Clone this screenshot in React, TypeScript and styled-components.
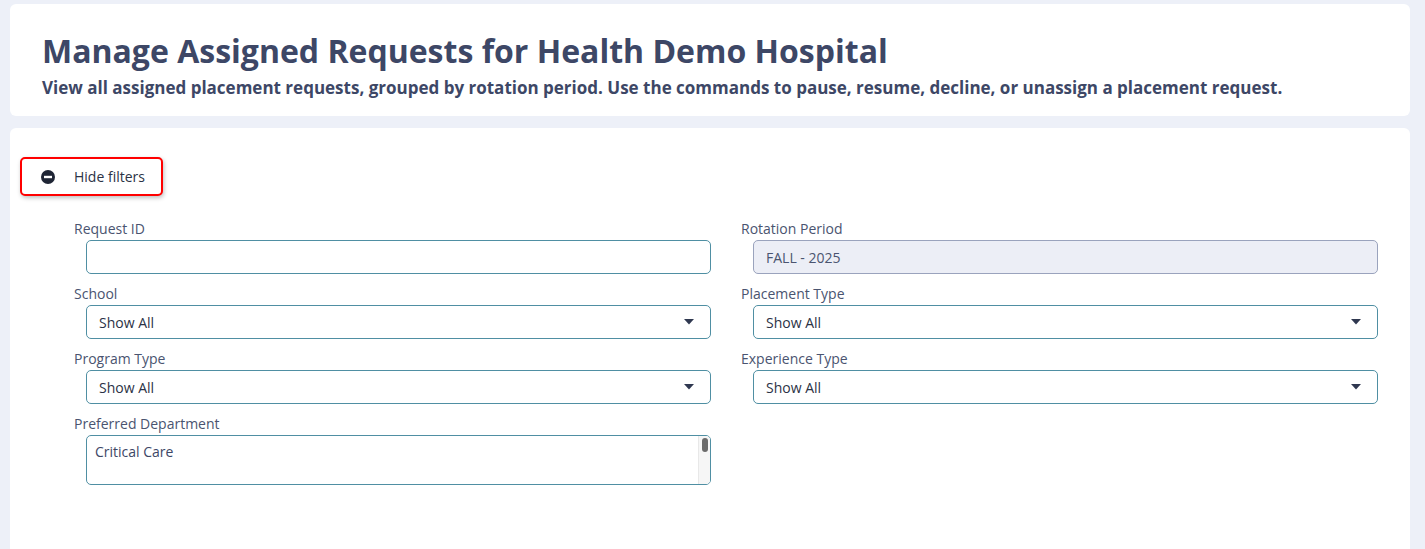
import React from "react";
import styled, { createGlobalStyle } from "styled-components";

const GlobalStyle = createGlobalStyle`
  body {
    margin: 0;
    background: #edf0f8;
    font-family: "Open Sans", "Noto Sans", sans-serif;
    color: #3d4766;
  }
`;

type Field = {
  label: string;
  kind: "text" | "select" | "disabled" | "list";
  value?: string;
};

const fields: Field[] = [
  { label: "Request ID", kind: "text" },
  { label: "Rotation Period", kind: "disabled", value: "FALL - 2025" },
  { label: "School", kind: "select", value: "Show All" },
  { label: "Placement Type", kind: "select", value: "Show All" },
  { label: "Program Type", kind: "select", value: "Show All" },
  { label: "Experience Type", kind: "select", value: "Show All" },
  { label: "Preferred Department", kind: "list", value: "Critical Care" },
];

const MinusCircle = () => (
  <svg width="14" height="14" viewBox="0 0 14 14">
    <circle cx="7" cy="7" r="7" fill="#1f2535" />
    <rect x="3" y="5.8" width="8" height="2.4" fill="#fff" />
  </svg>
);

const Caret = () => (
  <svg width="10" height="6" viewBox="0 0 10 6">
    <path d="M0 0 H10 L5 5.5 Z" fill="#2f3850" />
  </svg>
);

const renderControl = (field: Field) => {
  switch (field.kind) {
    case "text":
      return <Control />;
    case "disabled":
      return <Control $disabled>{field.value}</Control>;
    case "select":
      return (
        <Control>
          <span>{field.value}</span>
          <Caret />
        </Control>
      );
    case "list":
      return (
        <ListBox>
          <ListOption>{field.value}</ListOption>
          <ScrollTrack>
            <ScrollThumb />
          </ScrollTrack>
        </ListBox>
      );
  }
};

export default function App() {
  return (
    <>
      <GlobalStyle />
      <Page>
        <HeaderCard>
          <Title>Manage Assigned Requests for Health Demo Hospital</Title>
          <Subtitle>
            View all assigned placement requests, grouped by rotation period. Use the commands to
            pause, resume, decline, or unassign a placement request.
          </Subtitle>
        </HeaderCard>
        <FilterCard>
          <ToggleButton type="button">
            <MinusCircle />
            <span>Hide filters</span>
          </ToggleButton>
          <FilterGrid>
            {fields.map((field) => (
              <FieldGroup key={field.label}>
                <Label>{field.label}</Label>
                {renderControl(field)}
              </FieldGroup>
            ))}
          </FilterGrid>
        </FilterCard>
      </Page>
    </>
  );
}

const Page = styled.div`
  display: flex;
  flex-direction: column;
  gap: 12px;
  padding: 4px 15px 0 10px;
  height: 549px;
  box-sizing: border-box;
  overflow: hidden;
`;

const HeaderCard = styled.header`
  background: #fff;
  border-radius: 6px;
  padding: 27px 32px 17px;
`;

const Title = styled.h1`
  margin: 0;
  font-size: 32px;
  line-height: 40px;
  font-weight: 700;
  color: #3d4766;
`;

const Subtitle = styled.p`
  margin: 5px 0 0;
  font-size: 17px;
  line-height: 23px;
  font-weight: 700;
  color: #3d4766;
`;

const FilterCard = styled.section`
  flex: 1;
  background: #fff;
  border-radius: 6px 6px 0 0;
  padding: 29px 0 0 10px;
`;

const ToggleButton = styled.button`
  display: flex;
  align-items: center;
  gap: 19px;
  width: 143px;
  height: 39px;
  box-sizing: border-box;
  padding: 0 0 0 19px;
  background: #fff;
  border: 2.5px solid #f00;
  border-radius: 5px;
  box-shadow: 1px 2px 4px rgba(0, 0, 0, 0.25);
  font-family: inherit;
  font-size: 14px;
  color: #2b3245;
  cursor: pointer;
`;

const FilterGrid = styled.div`
  display: grid;
  grid-template-columns: 667px 667px;
  row-gap: 10px;
  margin: 23px 0 0 54px;
`;

const FieldGroup = styled.div`
  display: flex;
  flex-direction: column;
  gap: 1px;
`;

const Label = styled.label`
  font-size: 14px;
  line-height: 20px;
  color: #4a5470;
`;

const Control = styled.div<{ $disabled?: boolean }>`
  display: flex;
  align-items: center;
  justify-content: space-between;
  margin: 0 30px 0 12px;
  height: 34px;
  box-sizing: border-box;
  padding: 0 16px 0 12px;
  border: 1px solid ${({ $disabled }) => ($disabled ? "#9aa3bd" : "#4f8fa3")};
  border-radius: 5px;
  background: ${({ $disabled }) => ($disabled ? "#eceef6" : "#fff")};
  font-size: 14px;
  color: ${({ $disabled }) => ($disabled ? "#4a5470" : "#2b3245")};
`;

const ListBox = styled.div`
  display: flex;
  margin: 0 30px 0 12px;
  height: 50px;
  box-sizing: border-box;
  border: 1px solid #4f8fa3;
  border-radius: 5px;
  overflow: hidden;
`;

const ListOption = styled.div`
  flex: 1;
  padding: 6px 8px;
  font-size: 14px;
  line-height: 19px;
  color: #3d4766;
`;

const ScrollTrack = styled.div`
  width: 11px;
  background: #f6f6f6;
  border-left: 1px solid #e8e8e8;
  display: flex;
  justify-content: center;
  padding-top: 2px;
`;

const ScrollThumb = styled.div`
  width: 6px;
  height: 14px;
  border-radius: 3px;
  background: #6b6b6b;
`;
